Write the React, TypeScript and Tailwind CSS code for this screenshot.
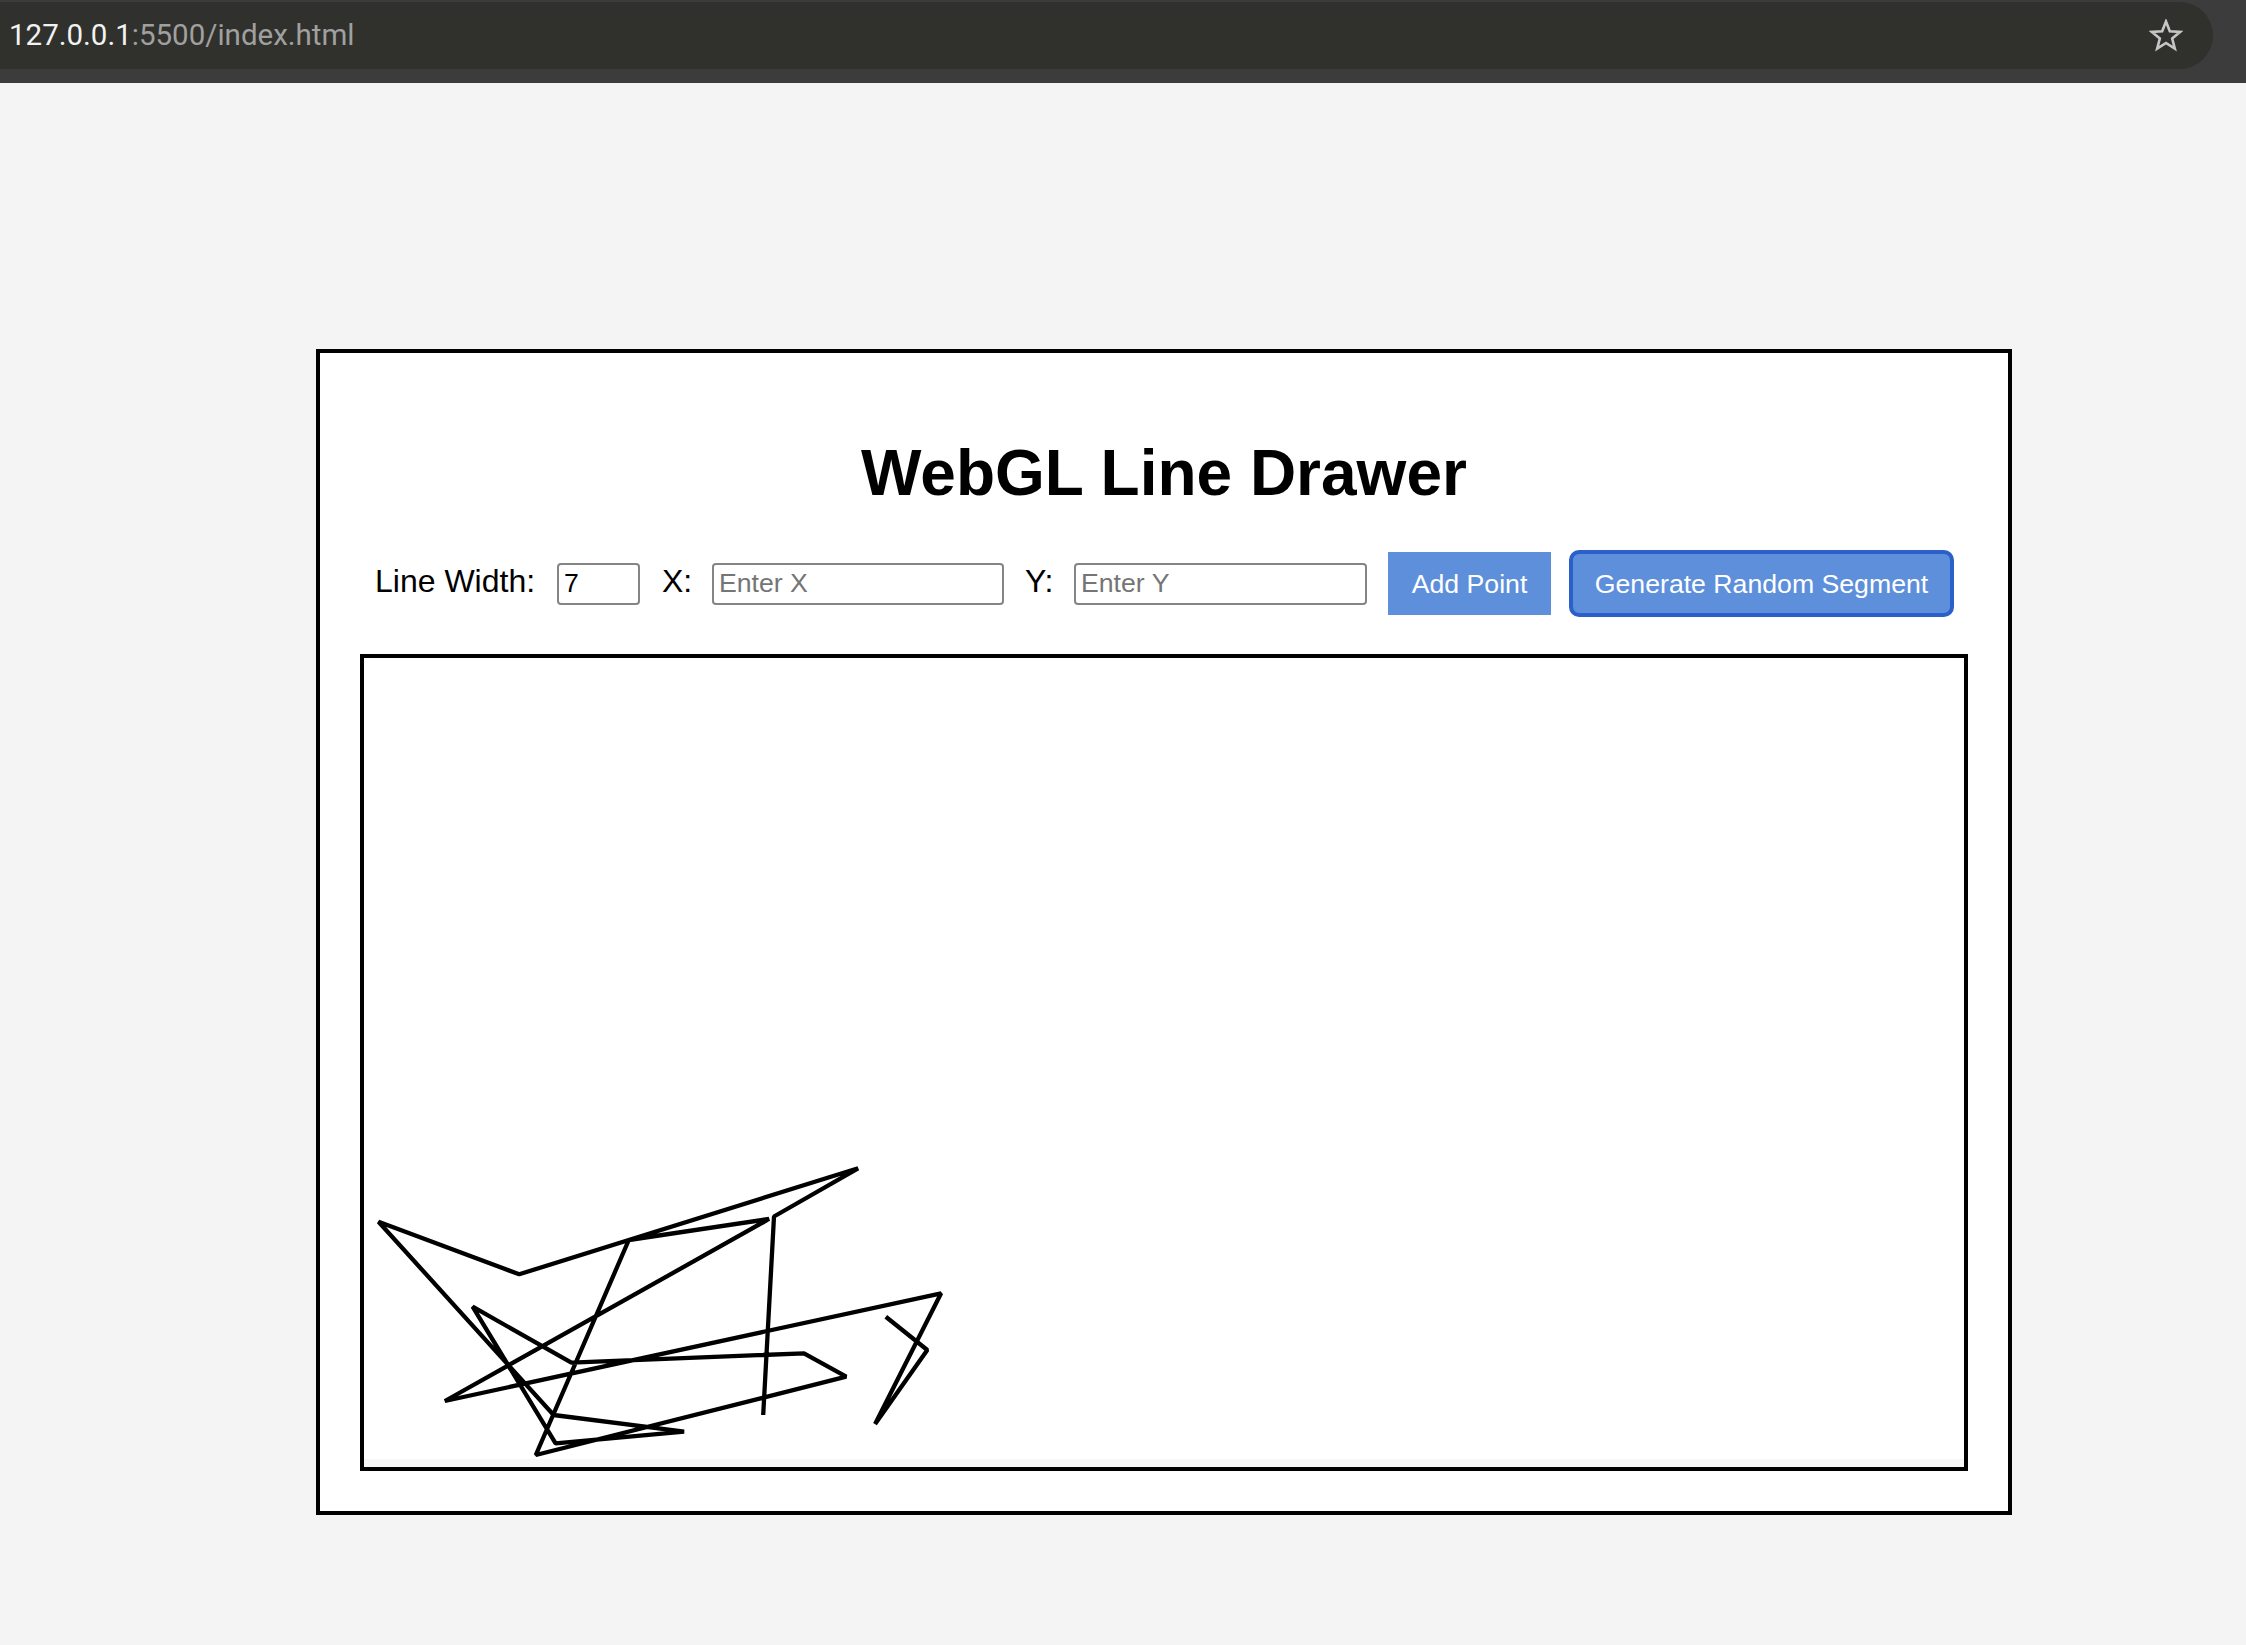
import React from "react";

const pts: [number, number][] = [
  [521.8, 658.7],
  [563.3, 692],
  [511.1, 766],
  [577.1, 635.3],
  [80.9, 743],
  [405, 561],
  [264.8, 582],
  [171.8, 797],
  [482.2, 718.7],
  [440, 695.3],
  [207.4, 704.7],
  [108.6, 648.7],
  [191.6, 785.3],
  [320.1, 773.7],
  [189.6, 757],
  [14.5, 563.7],
  [155.2, 616.3],
  [494.1, 510.3],
  [410, 558.5],
  [399.2, 757],
];

function Star() {
  return (
    <svg width="34" height="34" viewBox="0 0 34 34" className="block">
      <polygon
        points="17,2.5 20.82,12.24 31.27,12.86 23.18,19.51 25.82,29.64 17,24 8.18,29.64 10.82,19.51 2.73,12.86 13.18,12.24"
        fill="none"
        stroke="#c6c6c6"
        strokeWidth="2.6"
        strokeLinejoin="miter"
      />
    </svg>
  );
}

export default function App() {
  return (
    <div className="min-h-[1645px] w-full bg-[#f4f4f4] font-['Liberation_Sans',Arial,sans-serif] overflow-hidden">
      {/* Browser bar */}
      <div className="h-[83px] bg-[#3c3c3c] pt-[2px]">
        <div className="flex h-[67px] w-[2213px] items-center justify-between rounded-r-full bg-[#30302c] pl-[9px] pr-[30px]">
          <div className="font-['Roboto',sans-serif] text-[29.5px] leading-none">
            <span className="text-[#f2f2f2]">127.0.0.1</span>
            <span className="text-[#a0a0a0]">:5500/index.html</span>
          </div>
          <Star />
        </div>
      </div>

      {/* Main card */}
      <div className="ml-[316px] mt-[266px] w-[1696px] border-4 border-black bg-white pt-[83px] pb-[40px]">
        <h1 className="h-[74px] text-center text-[64px] font-bold leading-[74px] text-black">
          WebGL Line Drawer
        </h1>

        <div className="ml-[55px] mt-[40px] flex h-[67px] items-center text-[32px] text-black">
          <span className="w-[182px] shrink-0 pb-[5px] leading-[36px]">Line Width:</span>
          <input
            defaultValue="7"
            className="h-[42px] w-[83px] shrink-0 rounded-[4px] border-2 border-[#858585] bg-white pl-[5px] text-[26.67px] text-black outline-none"
          />
          <span className="ml-[22px] w-[50px] shrink-0 pb-[5px] leading-[36px]">X:</span>
          <input
            placeholder="Enter X"
            className="h-[42px] w-[292px] shrink-0 rounded-[4px] border-2 border-[#858585] bg-white pl-[5px] text-[26.67px] text-black outline-none placeholder:text-[#757575]"
          />
          <span className="ml-[21px] w-[49px] shrink-0 pb-[5px] leading-[36px]">Y:</span>
          <input
            placeholder="Enter Y"
            className="h-[42px] w-[293px] shrink-0 rounded-[4px] border-2 border-[#858585] bg-white pl-[5px] text-[26.67px] text-black outline-none placeholder:text-[#757575]"
          />
          <button className="ml-[21px] flex h-[63px] w-[163px] shrink-0 items-center justify-center bg-[#5e8fdb] text-[26.67px] text-white">
            Add Point
          </button>
          <button className="ml-[18px] flex h-[67px] w-[385px] shrink-0 items-center justify-center rounded-[10px] border-4 border-[#2b60ca] bg-[#5e8fdb] text-[26.67px] text-white">
            Generate Random Segment
          </button>
        </div>

        <div className="mx-[40px] mt-[37px] border-4 border-black bg-white">
          <svg width="1600" height="801" viewBox="0 0 1600 801" className="block bg-white">
            <polyline
              points={pts.map((p) => p.join(",")).join(" ")}
              fill="none"
              stroke="#000"
              strokeWidth="4.3"
              strokeLinejoin="bevel"
              strokeLinecap="butt"
            />
          </svg>
          <div className="h-[8px] bg-[#f7f7f7]" />
        </div>
      </div>
    </div>
  );
}
